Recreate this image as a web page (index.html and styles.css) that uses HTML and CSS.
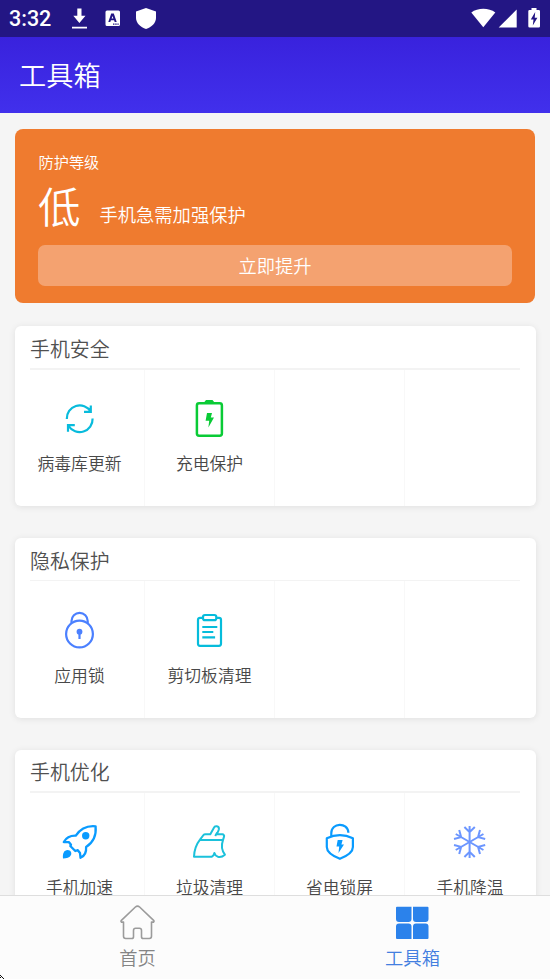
FILE: index.html
```html
<!DOCTYPE html>
<html lang="zh-CN">
<head>
<meta charset="utf-8">
<title>工具箱</title>
<link rel="stylesheet" href="styles.css">
</head>
<body>
<div class="screen">
  <div class="status">
    <span class="time">3:32</span>
    <svg class="status-left" width="94" height="37" viewBox="66 0 94 37" fill="#fff">
      <path d="M77.3 8.5h4.2v7.2h4L79.4 23l-6.1-7.3h4zM72 26.8h15v1.8H72z"/>
      <path fill-rule="evenodd" d="M107 10.5h11.500a1.500 1.500 0 0 1 1.500 1.500v12.500a1.500 1.500 0 0 1-1.500 1.500H107a1.500 1.500 0 0 1-1.500-1.500V12a1.500 1.500 0 0 1 1.500-1.500zM111.200 13.500l-2.900 8.500h2l.6-1.800h3.200l.6 1.800h2l-2.900-8.500zm1.300 2.400.9 2.700h-1.800zM113 23.500v1.200h1.500v-1.200zm2.200 0v1.200h1.500v-1.200zm2.200 0v1.200h1.300v-1.200z"/>
      <path d="M146 8l10 3.500v6.500c0 5-4.500 9.300-10 11-5.500-1.700-10-6-10-11v-6.500z"/>
    </svg>
    <svg class="status-right" width="80" height="37" viewBox="470 0 80 37" fill="#fff">
      <path d="M471.300 12.500c6.500-5 17.500-5 24 0L483.300 27.200z"/>
      <path d="M516.700 9.500v18h-18z"/>
      <path fill-rule="evenodd" d="M531.500 8h5v2h2.200a1.300 1.300 0 0 1 1.300 1.300v15a1.300 1.300 0 0 1-1.300 1.300h-9.100a1.300 1.300 0 0 1-1.300-1.300v-15a1.300 1.300 0 0 1 1.300-1.300h1.900zM535.200 12l-4.400 7.500h2.700l-.7 6 4.600-7.700h-2.700z"/>
    </svg>
  </div>
  <header class="appbar">工具箱</header>
  <main class="content">
    <section class="level">
      <div class="level-title">防护等级</div>
      <div class="level-row"><span class="level-value">低</span><span class="level-note">手机急需加强保护</span></div>
      <div class="level-button">立即提升</div>
    </section>

    <section class="card">
      <h2>手机安全</h2>
      <div class="tools">
        <div class="tool">
          <svg viewBox="0 0 60 50" fill="none" stroke="#08bbdc" stroke-width="2.200"><path d="M16.800 28a13 13 0 0 1 24-7.500M42.600 27.500a13 13 0 0 1-24 7.500M40.800 14.500v6.300h-6.800M18 40.800v-6.600h6.800"/></svg>
          <span>病毒库更新</span>
        </div>
        <div class="tool">
          <svg viewBox="0 0 60 50" fill="none" stroke="#0acb36" stroke-width="2.500"><rect x="16.900" y="12.300" width="25" height="32.400" rx="2.200"/><path fill="#0acb36" stroke="none" d="M24 12.500v-1l2-2.500h6.500l2 2.500v1zM27 22h5l-1.200 4.500h3.200l-5.600 10 .8-6.700h-3.600z"/></svg>
          <span>充电保护</span>
        </div>
        <div class="tool"></div>
        <div class="tool"></div>
      </div>
    </section>

    <section class="card thin">
      <h2>隐私保护</h2>
      <div class="tools">
        <div class="tool">
          <svg viewBox="0 0 60 50" fill="none" stroke="#4b80ff" stroke-width="2.200"><circle cx="29.500" cy="31" r="13.400"/><path d="M21.500 20v-2a8 8 0 0 1 16.200 0v2"/><path d="M29.500 29v7"/><circle cx="29.500" cy="28.700" r="2.900" fill="#4b80ff" stroke="none"/></svg>
          <span>应用锁</span>
        </div>
        <div class="tool">
          <svg viewBox="0 0 60 50" fill="none" stroke="#06bcdb" stroke-width="2.200"><path d="M22.500 14.800h-2.500a2 2 0 0 0-2 2v24a2 2 0 0 0 2 2h19a2 2 0 0 0 2-2v-24a2 2 0 0 0-2-2h-2.500"/><rect x="23" y="12" width="13.300" height="5.200" rx="2"/><path d="M22.300 24h15M22.300 29h11M22.300 34.300h12.800"/></svg>
          <span>剪切板清理</span>
        </div>
        <div class="tool"></div>
        <div class="tool"></div>
      </div>
    </section>

    <section class="card short">
      <h2>手机优化</h2>
      <div class="tools">
        <div class="tool">
          <svg viewBox="0 0 60 50" fill="none" stroke="#099bff" stroke-width="2.300" stroke-linejoin="round"><path d="M45.600 11.300C37.500 10.500 31 12.800 25.800 20.700 20 20.500 16 23 13.800 27l5.200.2 2 2.600-.7 1.200 5 5 2.500-.8 2.200 2.800.5 4.800c4.300-2 6-6.300 5.600-10.800 6.900-4.500 10.400-11 9.500-20.700z"/><circle cx="35.700" cy="20.700" r="3.700" fill="#099bff" stroke="none"/><path d="M13 43.500c-.5-5 1-8.500 4.700-8.500 3 0 4.300 3 3.300 5-1.300 2.700-4.500 3.500-8 3.500z" fill="#099bff" stroke="none"/></svg>
          <span>手机加速</span>
        </div>
        <div class="tool">
          <svg viewBox="0 0 60 50" fill="none" stroke="#1bc1db" stroke-width="2" stroke-linejoin="round"><path d="M14 41.700c.3-7 2.300-12.300 6-17l3.500-4.700c.5-.7 1.200-.8 2-.8h4.800l3.500-6.200c.9-2.700 5.500-2.300 5.100 1.200-.3 1.900-1.400 3.400-2.200 5l5.700.1c1.200.1 2 1.100 1.700 2.100l-1.200 4c-2 5.700-1.200 10 2 14.300-1.800 1.600-4.300 2.700-6.900 2.100-1.800-.6-3-1.700-3.600-3.900-.4 1.700-1.200 3-2.500 3.800zM35.200 21l2-3.500M20 24.900h22.800"/></svg>
          <span>垃圾清理</span>
        </div>
        <div class="tool">
          <svg viewBox="0 0 60 50" fill="none" stroke="#099bff" stroke-width="2.200" stroke-linejoin="round"><path d="M16.800 23.300q13.200-6.500 26.100 0v8.700c0 5.500-6 9-13 11.800-7.100-2.800-13.100-6.300-13.100-11.800z"/><path d="M21.300 21v-3c0-10.500 16.500-11.300 17.100-.2"/><path fill="#099bff" stroke="none" d="M27.700 25h4.900l-1.200 4.500h2.600l-5.500 8.500.7-6.500h-2.700z"/></svg>
          <span>省电锁屏</span>
        </div>
        <div class="tool">
          <svg viewBox="0 0 60 50" fill="none" stroke="#6c96ff" stroke-width="2"><defs><path id="arm" d="M29.600 27V11M24.400 12l5.200 5.200 5.200-5.200"/></defs><use href="#arm"/><use href="#arm" transform="rotate(60 29.600 27)"/><use href="#arm" transform="rotate(120 29.600 27)"/><use href="#arm" transform="rotate(180 29.600 27)"/><use href="#arm" transform="rotate(240 29.600 27)"/><use href="#arm" transform="rotate(300 29.600 27)"/></svg>
          <span>手机降温</span>
        </div>
      </div>
    </section>
  </main>
  <nav class="tabs">
    <div class="tab">
      <svg width="36" height="36" viewBox="120 904 36 36" fill="none" stroke="#9b9b9b" stroke-width="1.600" stroke-linejoin="round"><path d="M123.500 922v14.300q0 2.200 2.200 2.200h6q1.800 0 1.800-1.800v-6.200q0-2.200 2.200-2.200h3.600q2.200 0 2.200 2.200v6.200q0 1.800 1.800 1.800h6q2.200 0 2.200-2.200V922l2 .1q1-.9.1-1.800l-14-13.300q-2.100-1.900-4.200 0l-14 13.300q-.9.9.1 1.800z"/></svg>
      <span>首页</span>
    </div>
    <div class="tab active">
      <svg width="36" height="36" viewBox="395 904 36 36" fill="#2b82eb"><path d="M397 906.800h14.500V919a3 3 0 0 1-3 3H399a3 3 0 0 1-3-3v-11.200a1 1 0 0 1 1-1zM413 906.800h14.500a1 1 0 0 1 1 1V919a3 3 0 0 1-3 3H416a3 3 0 0 1-3-3zM399 923.600h9.500a3 3 0 0 1 3 3V939H397a1 1 0 0 1-1-1v-11.400a3 3 0 0 1 3-3zM416 923.600h9.500a3 3 0 0 1 3 3V938a1 1 0 0 1-1 1H413v-12.400a3 3 0 0 1 3-3z"/></svg>
      <span>工具箱</span>
    </div>
  </nav>
  <svg class="corner" width="4" height="4" viewBox="0 0 4 4" fill="#111"><path d="M0 0h1v1H0zM1 1h1v1H1zM2 2h1v1H2zM3 3h1v1H3zM0 2h1v1H0z"/></svg>
</div>
</body>
</html>
```

FILE: styles.css
```css
* { box-sizing: border-box; }
body {
  margin: 0;
  font-family: "Noto Sans CJK SC", sans-serif;
  font-weight: 350;
}
svg { display: block; }
.screen {
  position: relative;
  display: flex;
  flex-direction: column;
  width: 550px;
  height: 979px;
  overflow: hidden;
  background: #f5f5f5;
}
.status {
  display: flex;
  flex: none;
  height: 37px;
  background: #231684;
}
.time {
  width: 66px;
  padding-left: 9px;
  color: #fff;
  font-family: Roboto, sans-serif;
  font-size: 21.5px;
  font-weight: 500;
  line-height: 38px;
}
.status-right { margin-left: auto; }
.appbar {
  flex: none;
  height: 76px;
  padding-left: 19px;
  background: linear-gradient(#3922dd, #4130ec);
  color: #fff;
  font-size: 27.2px;
  line-height: 75px;
}
.content {
  flex: 1;
  min-height: 0;
  overflow: hidden;
  padding: 15.500px 14.500px 0;
}
.level {
  height: 174.500px;
  margin: 0 .5px;
  padding: 21px 23px 0;
  border-radius: 8px;
  background: #ef7b2f;
  color: #fff;
}
.level-title { padding-left: .5px; font-size: 15.200px; line-height: 22px; }
.level-row { display: flex; height: 73.500px; }
.level-value { width: 61.500px; font-size: 42.500px; line-height: 65px; }
.level-note { font-size: 18.300px; line-height: 85px; }
.level-button {
  height: 41px;
  border-radius: 7px;
  background: #f4a270;
  font-size: 18.300px;
  line-height: 40px;
  text-align: center;
}
.card {
  height: 180px;
  margin-top: 32px;
  border-radius: 6px;
  background: #fff;
  box-shadow: 0 1px 7px rgba(0, 0, 0, .09);
}
.level + .card { margin-top: 23px; }
.card h2 {
  height: 44px;
  margin: 0 15.500px;
  padding-top: 2px;
  border-bottom: 2px solid #f3f3f3;
  color: #505050;
  font-size: 19.900px;
  font-weight: 350;
  line-height: 42px;
}
.card.thin h2 { height: 43px; border-bottom-width: 1px; }
.card.short h2 { height: 43px; padding-top: 1px; }
.tools { display: flex; height: 136px; }
.thin .tools, .short .tools { height: 137px; }
.tool {
  width: 130px;
  padding-top: 21px;
  border-right: 1px solid #f8f8f8;
  text-align: center;
}
.thin .tool, .short .tool { padding-top: 22px; }
.tool:last-child { border-right: 0; }
.tool svg { width: 60px; height: 50px; margin-left: 35px; }
.tool span {
  display: block;
  margin: 10px -1px 0 0;
  color: #484848;
  font-size: 16.800px;
  line-height: 25px;
}
.tabs {
  display: flex;
  flex: none;
  height: 84px;
  border-top: 1px solid #dedede;
  background: #fcfcfc;
}
.tab {
  display: flex;
  flex: 1;
  flex-direction: column;
  align-items: center;
  padding-top: 8px;
  color: #858585;
  font-size: 18.300px;
  line-height: 27px;
}
.tab span { margin-top: 4px; }
.tab.active { color: #437fe0; }
.corner { position: absolute; left: 0; bottom: 0; }
```
